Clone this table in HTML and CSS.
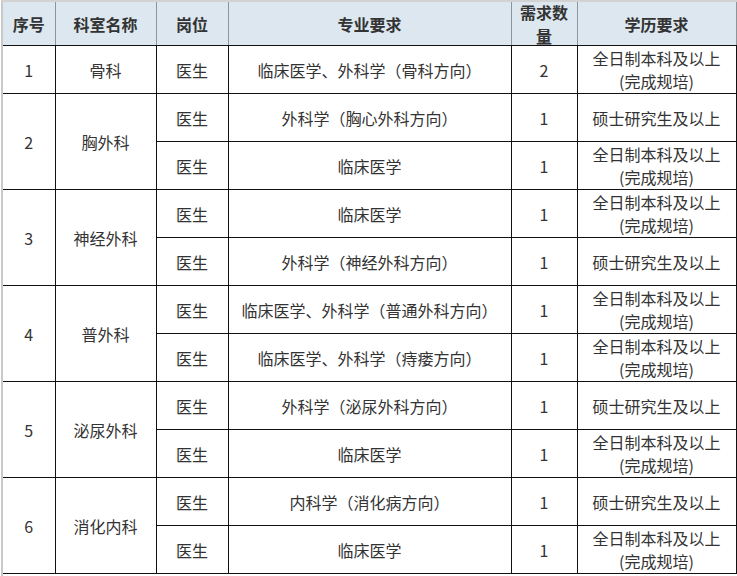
FILE: index.html
```html
<!DOCTYPE html>
<html lang="zh-CN">
<head>
<meta charset="utf-8">
<title>招聘岗位</title>
<link rel="stylesheet" href="styles.css">
</head>
<body>
<div class="sheet">
<table class="grid">
<colgroup>
<col class="c1"><col class="c2"><col class="c3"><col class="c4"><col class="c5"><col class="c6">
</colgroup>
<thead>
<tr>
<th class="first">序号</th><th>科室名称</th><th>岗位</th><th>专业要求</th><th><div class="two-h">需求数<br>量</div></th><th class="last">学历要求</th>
</tr>
</thead>
<tbody>
<tr><td class="first">1</td><td>骨科</td><td>医生</td><td>临床医学、外科学（骨科方向）</td><td>2</td><td class="last"><div class="two">全日制本科及以上<br>(完成规培)</div></td></tr>

<tr><td class="first" rowspan="2">2</td><td rowspan="2">胸外科</td><td>医生</td><td>外科学（胸心外科方向）</td><td>1</td><td class="last">硕士研究生及以上</td></tr>
<tr><td>医生</td><td>临床医学</td><td>1</td><td class="last"><div class="two">全日制本科及以上<br>(完成规培)</div></td></tr>

<tr><td class="first" rowspan="2">3</td><td rowspan="2">神经外科</td><td>医生</td><td>临床医学</td><td>1</td><td class="last"><div class="two">全日制本科及以上<br>(完成规培)</div></td></tr>
<tr><td>医生</td><td>外科学（神经外科方向）</td><td>1</td><td class="last">硕士研究生及以上</td></tr>

<tr><td class="first" rowspan="2">4</td><td rowspan="2">普外科</td><td>医生</td><td>临床医学、外科学（普通外科方向）</td><td>1</td><td class="last"><div class="two">全日制本科及以上<br>(完成规培)</div></td></tr>
<tr><td>医生</td><td>临床医学、外科学（痔瘘方向）</td><td>1</td><td class="last"><div class="two">全日制本科及以上<br>(完成规培)</div></td></tr>

<tr><td class="first" rowspan="2">5</td><td rowspan="2">泌尿外科</td><td>医生</td><td>外科学（泌尿外科方向）</td><td>1</td><td class="last">硕士研究生及以上</td></tr>
<tr><td>医生</td><td>临床医学</td><td>1</td><td class="last"><div class="two">全日制本科及以上<br>(完成规培)</div></td></tr>

<tr><td class="first" rowspan="2">6</td><td rowspan="2">消化内科</td><td>医生</td><td>内科学（消化病方向）</td><td>1</td><td class="last">硕士研究生及以上</td></tr>
<tr><td>医生</td><td>临床医学</td><td>1</td><td class="last"><div class="two">全日制本科及以上<br>(完成规培)</div></td></tr>
</tbody>
</table>
</div>
</body>
</html>
```

FILE: styles.css
```css
html, body {
  margin: 0;
  padding: 0;
  background: #ffffff;
}

body {
  font-family: "Noto Sans CJK SC", "Noto Sans", "Liberation Sans", sans-serif;
  color: #333333;
  font-size: 16px;
}

.sheet {
  margin-left: 1px;
  border-left: 2px solid #c9c9c9;
  border-top: 2px solid #d2d2d2;
  width: 736px;
  height: 574px;
  overflow: hidden;
}

.grid {
  border-collapse: collapse;
  table-layout: fixed;
  width: 733px;
}

.c1 { width: 52px; }
.c2 { width: 101px; }
.c3 { width: 72px; }
.c4 { width: 283px; }
.c5 { width: 66px; }
.c6 { width: 159px; }

.grid th {
  background: #dde7f0;
  font-weight: 700;
  height: 43px;
  padding: 0;
  text-align: center;
  vertical-align: middle;
  border-left: 1px solid #8f9499;
  border-right: 1px solid #8f9499;
  border-bottom: 1px solid #111111;
  color: #333333;
  line-height: 22px;
}

.grid td {
  height: 47px;
  padding: 0;
  text-align: center;
  vertical-align: middle;
  border: 1px solid #111111;
  line-height: 22px;
  white-space: nowrap;
}

.grid .first {
  border-left: none;
}

.two {
  line-height: 23px;
}

.two-h {
  line-height: 24px;
  margin: -3px 0;
}
```
